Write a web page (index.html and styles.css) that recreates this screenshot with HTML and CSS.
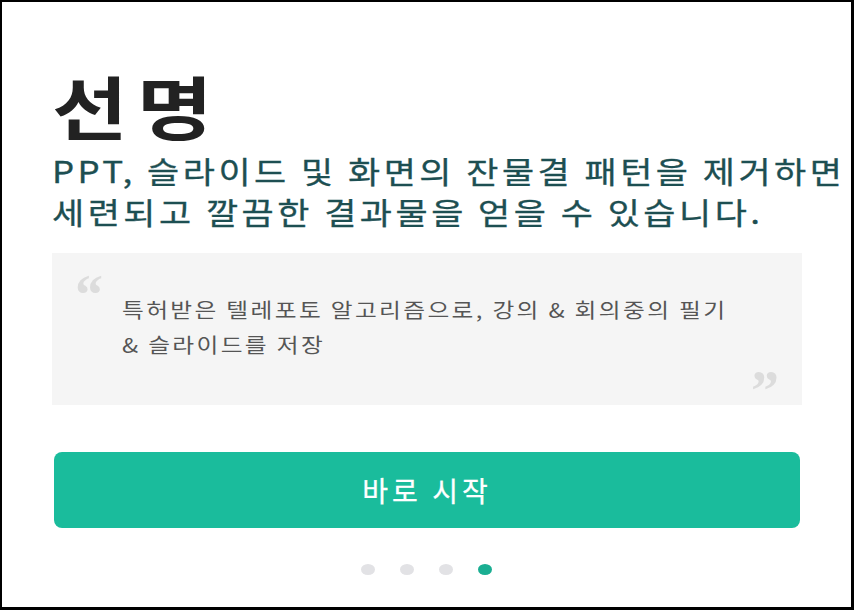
FILE: index.html
```html
<!DOCTYPE html>
<html>
  <head>
  <meta charset="utf-8">
  <link rel="stylesheet" href="styles.css">
  </head>
  <body>
    <div class="frame">
      <h1 class="title">선명</h1>
      <p class="lead">PPT, 슬라이드 및 화면의 잔물결 패턴을 제거하면<br>세련되고 깔끔한 결과물을 얻을 수 있습니다.</p>
      <div class="quote">
        <span class="mark open">&#8220;</span>
        <p class="quote_text">특허받은 텔레포토 알고리즘으로, 강의 &amp; 회의중의 필기<br>&amp; 슬라이드를 저장</p>
        <span class="mark close">&#8221;</span>
      </div>
      <button class="start_btn">바로 시작</button>
      <div class="dots">
        <span class="dot"></span>
        <span class="dot"></span>
        <span class="dot"></span>
        <span class="dot on"></span>
      </div>
    </div>
  </body>
</html>
```
FILE: styles.css
```css
html, body { margin: 0; padding: 0; background-color: #fff; }
body { font-family: "Noto Sans CJK KR", "Noto Sans", sans-serif; }
.frame {
  box-sizing: border-box;
  width: 854px;
  height: 610px;
  border: 2px solid #000;
  border-right-width: 3px;
  border-bottom-width: 3px;
  padding: 0 0 0 50px;
  display: flex;
  flex-direction: column;
  overflow: hidden;
}
.title {
  width: max-content;
  margin: 58px 0 0 0;
  font-size: 69px;
  line-height: 90px;
  letter-spacing: 8px;
  font-weight: bold;
  color: #222;
  transform: scaleX(1.19);
  transform-origin: left;
}
.lead {
  width: max-content;
  margin: 0;
  font-size: 30px;
  line-height: 41px;
  letter-spacing: 3px;
  font-weight: 400;
  color: #1d4f52;
  -webkit-text-stroke: 0.3px #1d4f52;
  white-space: nowrap;
  transform: scaleX(1.165);
  transform-origin: left;
}
.quote {
  position: relative;
  margin: 21px 0 0 0;
  width: 750px;
  height: 152px;
  background-color: #f5f5f5;
  box-sizing: border-box;
  padding: 39px 0 0 70px;
}
.quote_text {
  width: max-content;
  margin: 0;
  font-size: 20px;
  line-height: 35px;
  letter-spacing: 2px;
  color: #555;
  white-space: nowrap;
  transform: scaleX(1.185);
  transform-origin: left;
}
.mark {
  position: absolute;
  font-family: "Liberation Serif", serif;
  font-weight: bold;
  font-size: 56px;
  line-height: 56px;
  color: #dcdcdc;
}
.open { left: 23px; top: 14px; }
.close { right: 23px; top: 110px; }
.start_btn {
  margin: 47px 0 0 2px;
  width: 746px;
  height: 76px;
  border: none;
  border-radius: 8px;
  background-color: #1abc9c;
  color: #fff;
  font-family: "Noto Sans CJK KR", sans-serif;
  font-size: 28px;
  letter-spacing: 4px;
  font-weight: 400;
  -webkit-text-stroke: 0.3px #fff;
}
.dots {
  display: flex;
  gap: 25px;
  margin: 36px 0 0 309px;
}
.dot {
  width: 14px;
  height: 11px;
  border-radius: 50%;
  background-color: #e2e2e5;
}
.dot.on { background-color: #1aae92; }
```
